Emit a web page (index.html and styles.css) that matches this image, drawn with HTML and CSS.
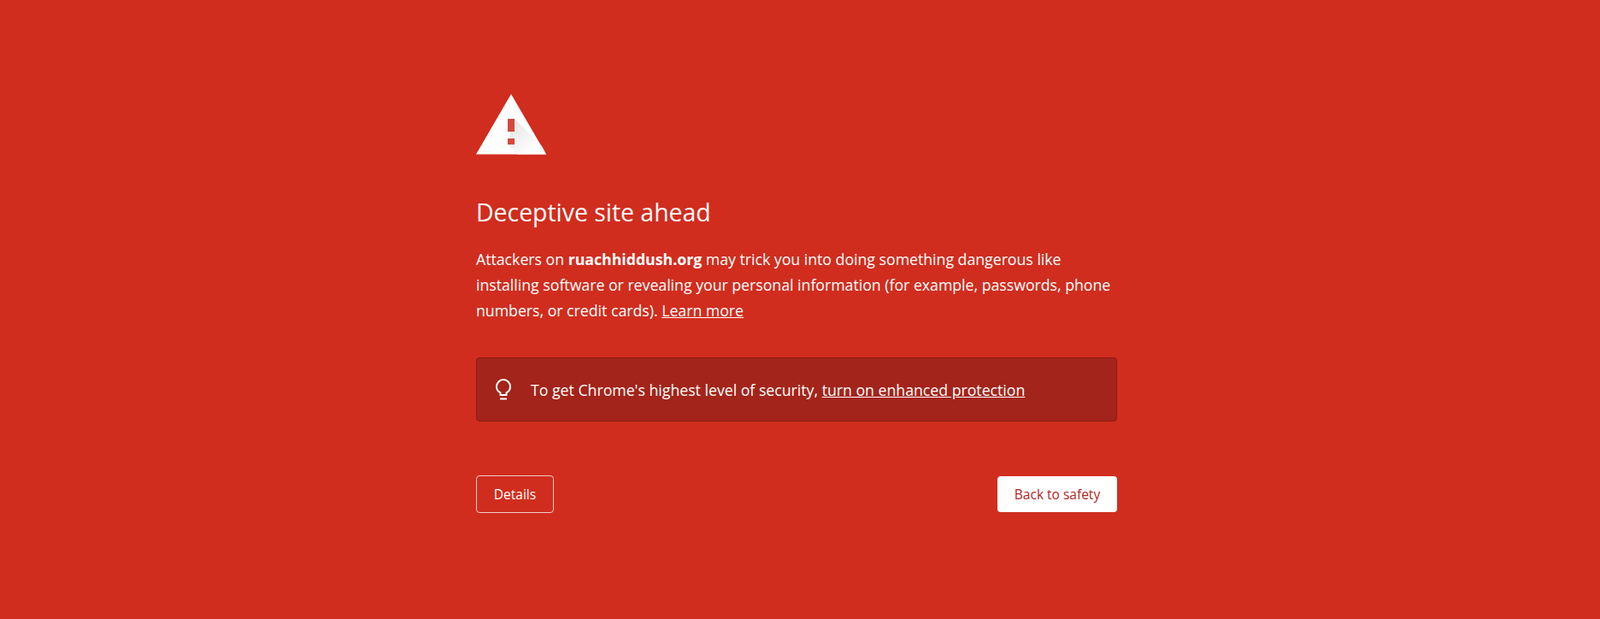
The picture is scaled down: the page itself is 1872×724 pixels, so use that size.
FILE: index.html
```html
<!DOCTYPE html>
<html lang="en">

<head>
    <meta charset="UTF-8">
    <meta name="viewport" content="width=device-width, initial-scale=1.0">
    <title>Security error</title>
    <link rel="stylesheet" href="styles.css">
</head>

<body>
    <div class="container">
        <svg class="warningIcon" width="82" height="71" viewBox="0 0 82 71">
            <defs>
                <linearGradient id="iconShadow" x1="0.15" y1="0.1" x2="0.8" y2="0.75">
                    <stop offset="0" stop-color="#e6e6e6"/>
                    <stop offset="1" stop-color="#fff"/>
                </linearGradient>
            </defs>
            <polygon points="41,0 82,70.500 0,70.500" fill="#fff"/>
            <polygon points="45,29 77,61 82,70.500 48,70.500 37,59" fill="url(#iconShadow)"/>
            <rect x="37" y="29" width="8" height="15" fill="#d6483b"/>
            <rect x="37" y="52" width="8" height="7" fill="#d6483b"/>
        </svg>

        <h1>Deceptive site ahead</h1>
        <p class="description">Attackers on <strong>ruachhiddush.org</strong> may trick you into doing something dangerous like installing software or revealing your personal information (for example, passwords, phone numbers, or credit cards). <a href="#">Learn more</a></p>

        <div class="promo">
            <svg class="bulb" width="18" height="25" viewBox="0 0 18 25" fill="none" stroke="#fff" stroke-width="2">
                <path d="M5.500 19v-2.600C3 15.100 1 12.400 1 9.300 1 4.800 4.600 1 9 1s8 3.800 8 8.300c0 3.100-2 5.800-4.500 7.100V19z"/>
                <path d="M5 23.500h8"/>
            </svg>
            <span>To get Chrome's highest level of security, <a href="#">turn on enhanced protection</a></span>
        </div>

        <div class="buttons">
            <button class="detailsBtn" type="button">Details</button>
            <button class="safetyBtn" type="button">Back to safety</button>
        </div>
    </div>
</body>

</html>
```

FILE: styles.css
```css
body {
    font-family: "Open Sans", "Noto Sans", Arial, sans-serif;
    background-color: #d02d1e;
    color: #fff;
    margin: 0;
    padding: 110px 8px 0 0;
    font-size: 17.7px;
    height: 724px;
    box-sizing: border-box;
    overflow: hidden;
}

.container {
    width: 750px;
    margin: 0 auto;
}

.warningIcon {
    display: block;
}

h1 {
    font-size: 28.4px;
    font-weight: 400;
    line-height: 38px;
    margin: 48px 0 0;
}

.description {
    line-height: 30px;
    margin: 21px 0 0;
}

a {
    color: #fff;
}

.promo {
    display: flex;
    align-items: center;
    height: 75px;
    margin-top: 40px;
    padding-left: 22px;
    background-color: #a3241a;
    border: 1px solid #8b1c13;
    border-radius: 4px;
    box-sizing: border-box;
}

.bulb {
    margin-right: 23px;
    flex-shrink: 0;
}

.buttons {
    display: flex;
    justify-content: space-between;
    align-items: center;
    margin-top: 63px;
}

button {
    font-family: inherit;
    font-size: 15.5px;
    border-radius: 4px;
    cursor: pointer;
}

.detailsBtn {
    width: 91px;
    height: 44px;
    color: #fff;
    background: none;
    border: 1px solid #f3cbc7;
}

.safetyBtn {
    width: 140px;
    height: 42px;
    color: #b3261e;
    background-color: #fff;
    border: none;
}
```
